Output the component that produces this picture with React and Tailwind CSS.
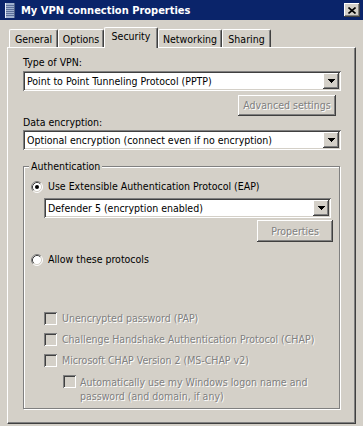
const FACE = "bg-[#d4d0c8]";
const RAISED =
  "shadow-[inset_-1px_-1px_#404040,inset_1px_1px_#fff,inset_-2px_-2px_#808080]";
const SUNKEN =
  "shadow-[inset_1px_1px_#808080,inset_-1px_-1px_#fff,inset_2px_2px_#404040,inset_-2px_-2px_#d4d0c8]";
const DISABLED = "text-[#808080] [text-shadow:1px_1px_0_#fff]";

const TABS = [
  { label: "General", w: "w-[49px]" },
  { label: "Options", w: "w-[46px]" },
  { label: "Security", w: "w-[54px]", active: true },
  { label: "Networking", w: "w-[64px]" },
  { label: "Sharing", w: "w-[49px]" },
];

const PROTOCOLS = [
  "Unencrypted password (PAP)",
  "Challenge Handshake Authentication Protocol (CHAP)",
  "Microsoft CHAP Version 2 (MS-CHAP v2)",
];

function Arrow() {
  return (
    <svg width="7" height="4" viewBox="0 0 7 4" shapeRendering="crispEdges">
      <path d="M0 0h7v1h-1v1h-1v1h-1v1h-1v-1h-1v-1h-1v-1h-1z" fill="#000" />
    </svg>
  );
}

function Combo({ value, className = "" }) {
  return (
    <div className={`flex h-[20px] bg-white p-[2px] ${SUNKEN} ${className}`}>
      <span className="flex-1 truncate pl-[2px] leading-[16px]">{value}</span>
      <span
        className={`flex w-[16px] items-center justify-center ${FACE} ${RAISED}`}
      >
        <Arrow />
      </span>
    </div>
  );
}

function Radio({ checked }) {
  return (
    <svg width="12" height="12" viewBox="0 0 12 12" className="shrink-0">
      <circle cx="6" cy="6" r="5" fill="#fff" />
      <path d="M2.11 9.89A5.5 5.5 0 0 1 9.89 2.11" stroke="#808080" fill="none" />
      <path d="M9.89 2.11A5.5 5.5 0 0 1 2.11 9.89" stroke="#fff" fill="none" />
      <path d="M2.82 9.18A4.5 4.5 0 0 1 9.18 2.82" stroke="#404040" fill="none" />
      <path d="M9.18 2.82A4.5 4.5 0 0 1 2.82 9.18" stroke="#d4d0c8" fill="none" />
      {checked && <circle cx="6" cy="6" r="2" fill="#000" />}
    </svg>
  );
}

function Checkbox() {
  return <span className={`h-[13px] w-[13px] shrink-0 ${FACE} ${SUNKEN}`} />;
}

function Button({ children, className = "" }) {
  return (
    <div
      className={`flex items-center justify-center ${FACE} ${RAISED} ${DISABLED} ${className}`}
    >
      {children}
    </div>
  );
}

function TitleIcon() {
  return (
    <svg width="10" height="15" viewBox="0 0 10 15" shapeRendering="crispEdges">
      <rect x="0" y="0" width="10" height="15" fill="#9fb1cf" />
      <rect x="0" y="0" width="1" height="15" fill="#e8eef8" />
      <rect x="9" y="0" width="1" height="15" fill="#4d5f86" />
      {[2, 4, 6, 8, 10, 12].map((y) => (
        <rect key={y} x="1" y={y} width="8" height="1" fill="#5b6f9a" />
      ))}
    </svg>
  );
}

export default function App() {
  return (
    <div
      className={`h-[426px] w-[363px] overflow-hidden ${FACE} font-['DejaVu_Sans_Condensed','DejaVu_Sans',sans-serif] text-[10.5px] leading-[13px] text-black [font-stretch:condensed]`}
    >
      <div className="flex h-[20px] items-center bg-[#0a246a] pl-[5px] pr-[3px]">
        <TitleIcon />
        <span className="ml-[6px] flex-1 text-[11px] font-bold text-white">
          My VPN connection Properties
        </span>
        <div
          className={`flex h-[14px] w-[16px] items-center justify-center ${FACE} ${RAISED}`}
        >
          <svg width="8" height="7" viewBox="0 0 8 7">
            <path d="M0.5 0.5L7.5 6.5M7.5 0.5L0.5 6.5" stroke="#000" strokeWidth="1.6" />
          </svg>
        </div>
      </div>

      <div className="px-[7px] pt-[7px]">
        <div className="flex h-[20px] items-end pl-[2px]">
          {TABS.map((tab) =>
            tab.active ? (
              <div
                key={tab.label}
                className={`relative z-10 -mb-px flex h-[21px] justify-center rounded-t-[2px] border-t border-l border-r border-t-white border-l-white border-r-[#404040] pt-[2px] ${FACE} shadow-[inset_-1px_0_#808080] ${tab.w}`}
              >
                {tab.label}
              </div>
            ) : (
              <div
                key={tab.label}
                className={`flex h-[18px] justify-center rounded-t-[2px] border-t border-l border-r border-t-white border-l-white border-r-[#404040] pt-[3px] shadow-[inset_-1px_0_#808080] ${tab.w}`}
              >
                {tab.label}
              </div>
            )
          )}
        </div>

        <div className="h-[377px] border border-t-white border-l-white border-r-[#404040] border-b-[#404040] pl-[15px] pt-[8px] shadow-[inset_-1px_-1px_#808080]">
          <div className="w-[318px]">
            <div>Type of VPN:</div>
            <Combo className="mt-[2px]" value="Point to Point Tunneling Protocol (PPTP)" />
            <div className="mt-[4px] flex justify-end pr-[5px]">
              <Button className="h-[21px] w-[98px]">Advanced settings</Button>
            </div>
            <div>Data encryption:</div>
            <Combo
              className="mt-[1px]"
              value="Optional encryption (connect even if no encryption)"
            />
          </div>

          <fieldset className="mt-[10px] w-[317px] border border-[#808080] pb-[5px] pl-[7px] pt-[7px] shadow-[inset_1px_1px_#fff,1px_1px_#fff]">
            <legend className="-ml-[2px] bg-[#d4d0c8] px-[2px]">Authentication</legend>
            <div className="flex h-[13px] items-center gap-[5px]">
              <Radio checked />
              <span>Use Extensible Authentication Protocol (EAP)</span>
            </div>
            <Combo className="ml-[13px] mt-[5px] w-[287px]" value="Defender 5 (encryption enabled)" />
            <Button className="ml-[226px] mt-[2px] h-[22px] w-[76px]">Properties</Button>
            <div className="mt-[11px] flex h-[13px] items-center gap-[5px]">
              <Radio />
              <span>Allow these protocols</span>
            </div>

            <div className="ml-[13px] mt-[46px] flex flex-col gap-[8px]">
              {PROTOCOLS.map((p) => (
                <div key={p} className="flex h-[13px] items-center gap-[5px]">
                  <Checkbox />
                  <span className={DISABLED}>{p}</span>
                </div>
              ))}
              <div className="ml-[19px] flex items-start gap-[4px]">
                <Checkbox />
                <span className={`${DISABLED} leading-[14px]`}>
                  Automatically use my Windows logon name and
                  <br />
                  password (and domain, if any)
                </span>
              </div>
            </div>
          </fieldset>
        </div>
      </div>
    </div>
  );
}
